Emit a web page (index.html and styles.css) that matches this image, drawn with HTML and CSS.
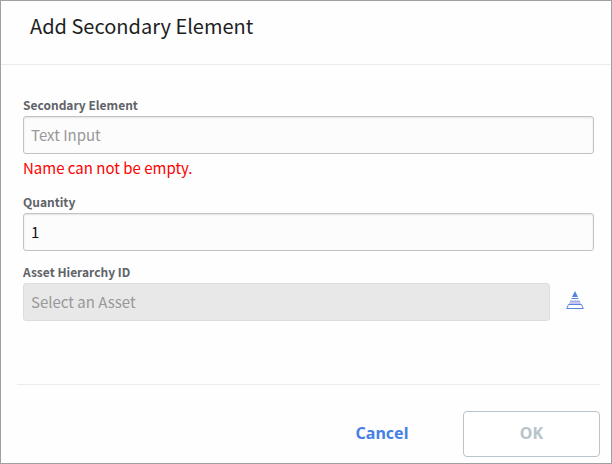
FILE: index.html
```html
<!DOCTYPE html>
<html lang="en">
<head>
    <meta charset="UTF-8" />
    <meta name="viewport" content="width=device-width, initial-scale=1.0" />
    <title>Add Secondary Element</title>
    <link rel="stylesheet" href="styles.css">
</head>
<body>
    <form class="dialog" role="dialog" aria-labelledby="dialog-title">
        <!-- Header -->
        <div class="dialog-header">
            <h1 id="dialog-title">Add Secondary Element</h1>
        </div>

        <!-- Fields -->
        <div class="dialog-body">
            <div class="field">
                <label for="element-name">Secondary Element</label>
                <input type="text" id="element-name" placeholder="Text Input" aria-describedby="name-error" />
                <p class="error" id="name-error">Name can not be empty.</p>
            </div>
            <div class="field">
                <label for="quantity">Quantity</label>
                <input type="text" id="quantity" value="1" />
            </div>
            <div class="field">
                <label for="asset-id">Asset Hierarchy ID</label>
                <div class="asset-row">
                    <input type="text" id="asset-id" placeholder="Select an Asset" disabled />
                    <button type="button" class="asset-btn" aria-label="Select an asset">
                        <svg width="18" height="18" viewBox="0 0 18 18">
                            <path d="M9 0L12 6H6Z" fill="#5585dc" />
                            <path d="M5 7H13L14 10H4Z" fill="#fff" />
                            <path d="M5.5 7.5H12.5M4 10.2H14" stroke="#5c85dc" />
                            <path d="M3.8 10.7H14.2L15.2 13H2.8Z" fill="#c9c4f4" />
                            <path d="M2.5 13.5H15.5L17.3 17.5H0.7Z" fill="#fff" stroke="#5c85dc" />
                        </svg>
                    </button>
                </div>
            </div>
        </div>

        <!-- Footer -->
        <div class="dialog-footer">
            <button type="button" class="cancel-btn">Cancel</button>
            <button type="submit" class="ok-btn" disabled>OK</button>
        </div>
    </form>
</body>
</html>
```
FILE: styles.css
```css
* {
    box-sizing: border-box;
}
body {
    font-family: "Noto Sans CJK JP", "Noto Sans", sans-serif;
    background-color: #fff;
    margin: 0;
}
.dialog {
    display: flex;
    flex-direction: column;
    min-height: 100vh;
    border: 1px solid #a0a0a0;
    background-color: #fefefe;
}
/* Header */
.dialog-header {
    padding: 9px 29px 22px;
    border-bottom: 1px solid #e8eced;
}
.dialog-header h1 {
    margin: 0;
    font-size: 20px;
    font-weight: 400;
    line-height: 32px;
    color: #1d1f23;
}
/* Fields */
.dialog-body {
    display: flex;
    flex-direction: column;
    gap: 12px;
    flex: 1;
    padding: 31px 17px 24px 22px;
}
.field label {
    display: block;
    padding-bottom: 2px;
    font-size: 12px;
    font-weight: 700;
    line-height: 18px;
    color: #5f6368;
}
.field input {
    display: block;
    width: 100%;
    height: 38px;
    padding: 0 7px 2px;
    border: 1px solid #bfc3c5;
    border-radius: 3px;
    background-color: #fcfcfc;
    box-shadow: inset 0 1px 2px rgba(0, 0, 0, 0.1);
    font-family: inherit;
    font-size: 15px;
    color: #111;
}
.field input::placeholder {
    color: #989898;
    opacity: 1;
}
.field input:disabled {
    background-color: #e8e8e8;
    border-color: #d9dee2;
    box-shadow: none;
}
.error {
    margin: 0;
    font-size: 15px;
    line-height: 27px;
    color: #f00;
}
.asset-row {
    display: flex;
    align-items: center;
    gap: 16px;
}
.asset-btn {
    display: flex;
    margin-right: 10px;
    padding: 0 0 4px;
    border: none;
    background: none;
    cursor: pointer;
}
.asset-btn svg {
    flex: none;
}
/* Footer */
.dialog-footer {
    display: flex;
    justify-content: flex-end;
    gap: 26px;
    margin: 0 11px 0 16px;
    padding: 26px 0 6px;
    border-top: 1px solid #ececec;
}
.dialog-footer button {
    height: 46px;
    padding: 0 0 2px;
    border-radius: 4px;
    font-family: "Noto Sans", sans-serif;
    font-size: 16px;
    font-weight: 700;
}
.cancel-btn {
    width: 110px;
    border: none;
    background: none;
    color: #4680e6;
    cursor: pointer;
}
.ok-btn {
    width: 137px;
    border: 1px solid #b8c3ca;
    background-color: #fff;
    color: #b8c3ca;
}
```
